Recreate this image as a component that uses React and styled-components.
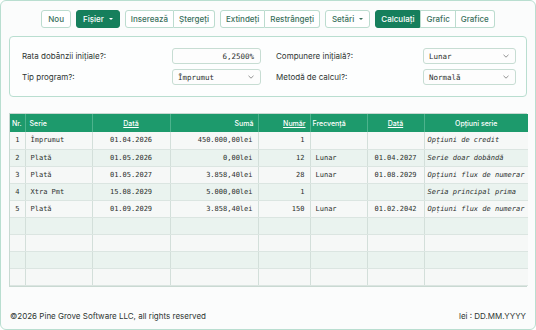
import React from 'react';
import styled, { createGlobalStyle } from 'styled-components';

const Global = createGlobalStyle`
  html, body { margin: 0; padding: 0; background: #ffffff; }
  * { box-sizing: border-box; }
`;

const Frame = styled.div`
  width: 536px;
  height: 330px;
  border: 1px solid #b9ded0;
  border-radius: 6px;
  background: #fbfcfc;
  font-family: Inter, "Noto Sans", sans-serif;
  color: #2e3532;
  display: flex;
  flex-direction: column;
  padding: 9px 8px 0 8px;
`;

const Toolbar = styled.div`
  display: flex;
  justify-content: center;
  gap: 5px;
  height: 18px;
`;

const Group = styled.div`
  display: flex;
`;

const Btn = styled.button`
  height: 18px;
  padding: 0 ${p => (p.$wide ? 6 : 5)}px;
  font-family: Inter, "Noto Sans", sans-serif;
  font-size: 8px;
  font-weight: 500;
  border: 1px solid ${p => (p.$primary ? '#157e5b' : '#bcdccf')};
  background: ${p => (p.$primary ? '#167f5c' : '#ffffff')};
  color: ${p => (p.$primary ? '#ffffff' : '#3a6f5c')};
  border-radius: 3px;
  display: flex;
  align-items: center;
  gap: 5px;
  cursor: pointer;
  ${Group} > & { border-radius: 0; }
  ${Group} > &:first-child { border-radius: 3px 0 0 3px; }
  ${Group} > &:last-child { border-radius: 0 3px 3px 0; }
  ${Group} > & + & { border-left: none; }
`;

const Caret = styled.span`
  width: 0;
  height: 0;
  border-left: 2px solid transparent;
  border-right: 2px solid transparent;
  border-top: 2.5px solid currentColor;
`;

const Panel = styled.div`
  margin-top: 8px;
  border: 1px solid #b9ded0;
  border-radius: 4px;
  background: #fdfefe;
  padding: 11px 11px 11px 12px;
  display: grid;
  grid-template-columns: 150px 89px 15px 147px 93px;
  grid-auto-rows: 16px;
  row-gap: 5px;
  align-items: center;
`;

const Label = styled.div`
  font-size: 8px;
  color: #2e3532;
  grid-column: ${p => p.$col};
`;

const Field = styled.div`
  grid-column: ${p => p.$col};
  height: 16px;
  border: 1px solid #c7ddd3;
  border-radius: 3px;
  background: #fdfdfd;
  display: flex;
  align-items: center;
  justify-content: ${p => (p.$right ? 'flex-end' : 'space-between')};
  padding: 0 6px 0 5px;
  font-family: "DejaVu Sans Mono", monospace;
  font-size: 7.5px;
  color: #2b2f2d;
`;

const Chevron = () => (
  <svg width="6" height="4" viewBox="0 0 6 4">
    <path d="M0.5 0.8 L3 3.2 L5.5 0.8" fill="none" stroke="#777" strokeWidth="0.8" />
  </svg>
);

const TableWrap = styled.div`
  margin-top: 16px;
  border: 1px solid #c9d9d2;
`;

const Grid = styled.table`
  width: 100%;
  table-layout: fixed;
  border-collapse: collapse;
`;

const Th = styled.th`
  height: 18px;
  background: #1d9a6c;
  color: #ffffff;
  font-family: Inter, "Noto Sans", sans-serif;
  font-size: 7px;
  font-weight: 500;
  text-align: ${p => p.$align || 'left'};
  padding: 0 ${p => (p.$tight ? 2 : 4)}px;
  text-decoration: ${p => (p.$link ? 'underline' : 'none')};
  border-right: 1px solid #4db38d;
  &:last-child { border-right: none; }
`;

const Tr = styled.tr`
  background: ${p => (p.$odd ? '#f6f8f7' : '#eaf3ef')};
`;

const Td = styled.td`
  height: 17px;
  padding: 0 ${p => (p.$tight ? 3 : 5)}px;
  font-family: "DejaVu Sans Mono", monospace;
  font-size: 7px;
  font-style: ${p => (p.$italic ? 'italic' : 'normal')};
  color: #2b2f2d;
  text-align: ${p => p.$align || 'left'};
  white-space: nowrap;
  overflow: hidden;
  border-right: 1px solid #d3dfda;
  border-bottom: 1px solid #dbe5e1;
  &:last-child { border-right: none; }
`;

const Footer = styled.div`
  flex: 1;
  display: flex;
  justify-content: space-between;
  align-items: flex-end;
  font-size: 8px;
  color: #2e3532;
  padding: 0 1px 8px 1px;
`;

const rows = [
  ['1', 'Împrumut', '01.04.2026', '450.000,00lei', '1', '', '', 'Opțiuni de credit'],
  ['2', 'Plată', '01.05.2026', '0,00lei', '12', 'Lunar', '01.04.2027', 'Serie doar dobândă'],
  ['3', 'Plată', '01.05.2027', '3.858,40lei', '28', 'Lunar', '01.08.2029', 'Opțiuni flux de numerar'],
  ['4', 'Xtra Pmt', '15.08.2029', '5.000,00lei', '1', '', '', 'Seria principal prima'],
  ['5', 'Plată', '01.09.2029', '3.858,40lei', '150', 'Lunar', '01.02.2042', 'Opțiuni flux de numerar'],
  ['', '', '', '', '', '', '', ''],
  ['', '', '', '', '', '', '', ''],
  ['', '', '', '', '', '', '', ''],
  ['', '', '', '', '', '', '', ''],
];

const widths = [15, 67, 78, 88, 52, 57, 57, 104];
const aligns = ['center', 'left', 'center', 'right', 'right', 'left', 'center', 'left'];

export default function App() {
  return (
    <>
      <Global />
      <Frame>
        <Toolbar>
          <Btn $wide>Nou</Btn>
          <Btn $primary $wide>Fișier <Caret /></Btn>
          <Group>
            <Btn>Inserează</Btn>
            <Btn>Ștergeți</Btn>
          </Group>
          <Group>
            <Btn>Extindeți</Btn>
            <Btn>Restrângeți</Btn>
          </Group>
          <Btn $wide>Setări <Caret /></Btn>
          <Group>
            <Btn $primary>Calculați</Btn>
            <Btn>Grafic</Btn>
            <Btn>Grafice</Btn>
          </Group>
        </Toolbar>

        <Panel>
          <Label $col={1}>Rata dobânzii inițiale?:</Label>
          <Field $col={2} $right>6,2500%</Field>
          <Label $col={4}>Compunere inițială?:</Label>
          <Field $col={5}>Lunar <Chevron /></Field>
          <Label $col={1}>Tip program?:</Label>
          <Field $col={2}>Împrumut <Chevron /></Field>
          <Label $col={4}>Metodă de calcul?:</Label>
          <Field $col={5}>Normală <Chevron /></Field>
        </Panel>

        <TableWrap>
          <Grid>
            <colgroup>
              {widths.map((w, i) => <col key={i} style={{ width: w }} />)}
            </colgroup>
            <thead>
              <tr>
                <Th $tight>Nr.</Th>
                <Th>Serie</Th>
                <Th $align="center" $link>Dată</Th>
                <Th $align="right">Sumă</Th>
                <Th $align="right" $link>Număr</Th>
                <Th $tight>Frecvență</Th>
                <Th $align="center" $link>Dată</Th>
                <Th $align="center">Opțiuni serie</Th>
              </tr>
            </thead>
            <tbody>
              {rows.map((r, i) => (
                <Tr key={i} $odd={i % 2 === 0}>
                  {r.map((c, j) => (
                    <Td key={j} $align={aligns[j]} $italic={j === 7} $tight={j === 0 || j === 7}>
                      {c}
                    </Td>
                  ))}
                </Tr>
              ))}
            </tbody>
          </Grid>
        </TableWrap>

        <Footer>
          <span>©2026 Pine Grove Software LLC, all rights reserved</span>
          <span>lei : DD.MM.YYYY</span>
        </Footer>
      </Frame>
    </>
  );
}
